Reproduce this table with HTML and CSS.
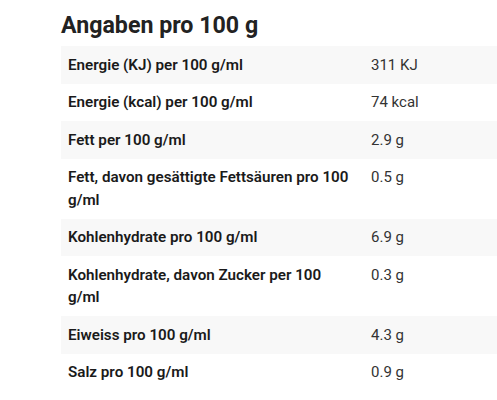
FILE: index.html
```html
<!DOCTYPE html>
<html lang="de">
<head>
<meta charset="utf-8">
<link rel="stylesheet" href="styles.css">
</head>
<body>
<section class="nutrition">
  <h2 class="title">Angaben pro 100 g</h2>
  <table class="facts">
    <tbody>
      <tr><th>Energie (KJ) per 100 g/ml</th><td>311 KJ</td></tr>
      <tr><th>Energie (kcal) per 100 g/ml</th><td>74 kcal</td></tr>
      <tr><th>Fett per 100 g/ml</th><td>2.9 g</td></tr>
      <tr><th>Fett, davon gesättigte Fettsäuren pro 100 g/ml</th><td>0.5 g</td></tr>
      <tr><th>Kohlenhydrate pro 100 g/ml</th><td>6.9 g</td></tr>
      <tr><th>Kohlenhydrate, davon Zucker per 100 g/ml</th><td>0.3 g</td></tr>
      <tr><th>Eiweiss pro 100 g/ml</th><td>4.3 g</td></tr>
      <tr><th>Salz pro 100 g/ml</th><td>0.9 g</td></tr>
    </tbody>
  </table>
</section>
</body>
</html>
```
FILE: styles.css
```css
html, body {
  margin: 0;
  padding: 0;
  background: #ffffff;
  overflow: hidden;
}
body {
  font-family: Roboto, "Liberation Sans", Arial, sans-serif;
  color: #222222;
}
.nutrition {
  padding: 10px 0 0 61px;
}
.title {
  margin: 0 0 6px 0;
  font-size: 23.2px;
  line-height: 30px;
  font-weight: 700;
  color: #222222;
}
.facts {
  width: 100%;
  border-collapse: collapse;
  font-size: 15px;
  line-height: 22.5px;
}
.facts tr:nth-child(odd) {
  background: #f8f8f8;
}
.facts th,
.facts td {
  padding: 7.5px 7px;
  text-align: left;
  vertical-align: top;
}
.facts th {
  width: 284px;
  padding-right: 12px;
  font-size: 15.2px;
  font-weight: 600;
  color: #1a1a1a;
}
.facts td {
  font-weight: 400;
  color: #333333;
}
```
